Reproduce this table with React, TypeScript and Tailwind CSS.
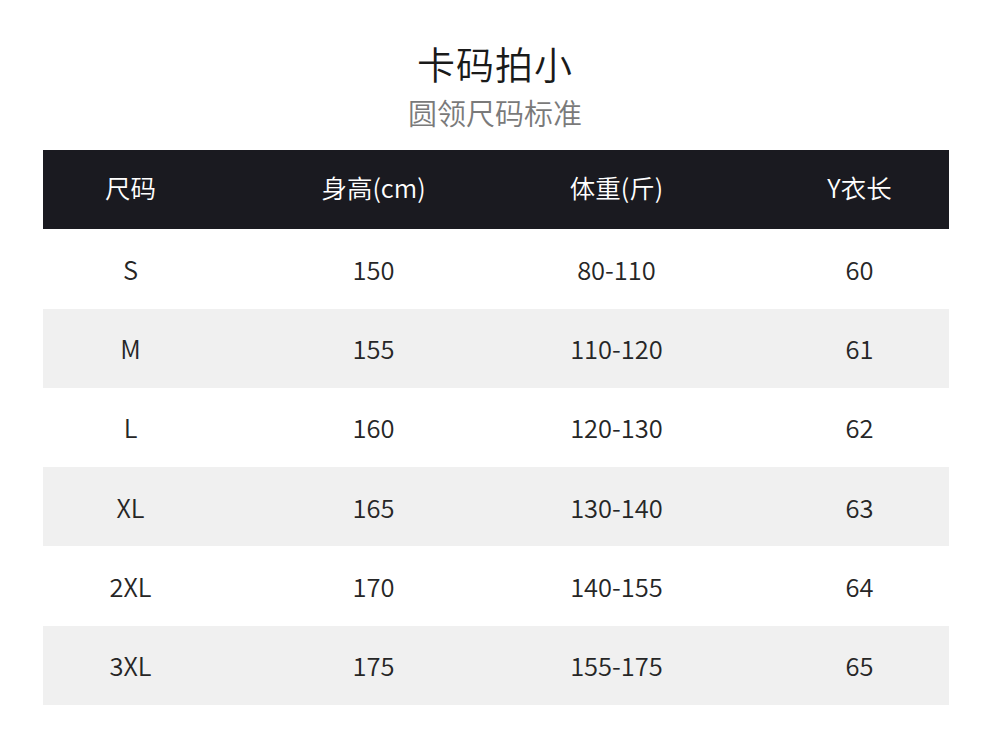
import React from 'react'

const font = '"Noto Sans CJK SC", "Noto Sans", sans-serif'

const headers = ['尺码', '身高(cm)', '体重(斤)', 'Y衣长']

const rows = [
  ['S', '150', '80-110', '60'],
  ['M', '155', '110-120', '61'],
  ['L', '160', '120-130', '62'],
  ['XL', '165', '130-140', '63'],
  ['2XL', '170', '140-155', '64'],
  ['3XL', '175', '155-175', '65'],
]

/**
 * One table row: cells are 243px wide, shifted left so the
 * column centres match the artwork
 */
function Row({ cells, className, textClass }: { cells: string[]; className: string; textClass: string }) {
  return (
    <div className={`h-[79.3px] flex items-center overflow-hidden ${className}`}>
      <div className="ml-[-34px] flex shrink-0">
        {cells.map((c, i) => (
          <div key={i} className={`w-[243px] shrink-0 text-center text-[25.5px] leading-none font-[350] ${textClass}`}>
            {c}
          </div>
        ))}
      </div>
    </div>
  )
}

export default function App() {
  return (
    <div className="w-[990px] h-[746px] bg-white overflow-hidden" style={{ fontFamily: font }}>
      {/* Title */}
      <div className="pt-[42px] flex flex-col items-center">
        <h1 className="text-[38px] leading-[42px] font-[350] text-[#1a1a1a] tracking-[1px]">卡码拍小</h1>
        <p className="mt-[12px] text-[29px] leading-[32px] font-[350] text-[#7a7a7a]">圆领尺码标准</p>
      </div>

      {/* Table */}
      <div className="mt-[22px] mx-[43px] w-[906px]">
        <Row cells={headers} className="bg-[#1a1a20] pb-[6px]" textClass="text-white" />
        {rows.map((r, i) => (
          <Row
            key={r[0]}
            cells={r}
            className={`pb-[1px] ${i % 2 === 1 ? 'bg-[#f0f0f0]' : 'bg-white'}`}
            textClass="text-[#262626]"
          />
        ))}
      </div>
    </div>
  )
}
